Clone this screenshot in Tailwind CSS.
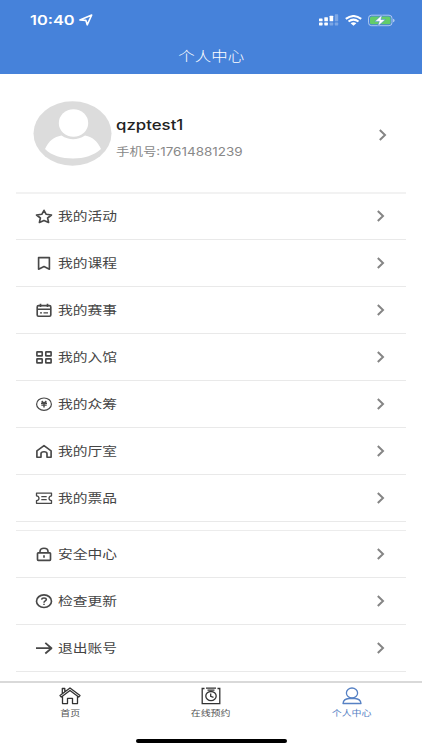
<!DOCTYPE html>
<html lang="zh-CN">
<head>
<meta charset="utf-8">
<meta name="viewport" content="width=device-width, initial-scale=1">
<title>个人中心</title>
<script src="https://cdn.jsdelivr.net/npm/@tailwindcss/browser@4"></script>
</head>
<body class="w-[422px] h-[750px] overflow-hidden bg-white flex flex-col font-['Inter','Noto_Sans_CJK_SC',sans-serif]">
<header class="h-[74px] shrink-0 bg-[#4682da] text-white flex flex-col">
  <div class="h-10 flex items-center justify-between pl-[31px] pr-[27px]">
    <div class="flex items-center">
      <span class="block w-[49px] text-[13px] leading-5 font-semibold whitespace-nowrap origin-left scale-x-[1.26] -ml-px">10:40</span>
      <svg class="w-[14px] h-[12px]" viewBox="0 0 14 12" fill="none" stroke="white" stroke-width="1.6" stroke-linejoin="round"><path d="M.9 5.9 12.7 1 8.2 10.800 6.900 6.400Z"/></svg>
    </div>
    <div class="flex items-center">
      <svg class="w-[20px] h-[12px] mr-[6px]" viewBox="0 0 20 12" fill="white"><rect x="0" y="4.5" width="3.6" height="2.8" rx=".6"/><rect x="5.3" y="3.2" width="3.6" height="4.1" rx=".6"/><rect x="10.6" y="1.7" width="3.6" height="5.6" rx=".6"/><rect x="15.8" y="0.3" width="3.4" height="7" rx=".6" opacity=".3"/><rect x="0" y="8.6" width="3.6" height="2.8" rx=".6"/><rect x="5.3" y="8.6" width="3.6" height="2.8" rx=".6"/><rect x="10.6" y="8.6" width="3.6" height="2.8" rx=".6" opacity=".3"/><rect x="15.8" y="8.6" width="3.4" height="2.8" rx=".6" opacity=".3"/></svg>
      <svg class="w-[17px] h-[11px] mr-[6px]" viewBox="0 0 17 11" fill="none" stroke="white" stroke-width="2"><path d="M.8 3.900Q8.500-1.900 16.200 3.900M3.500 6.500Q8.500 2.700 13.500 6.500"/><path d="M5.600 8.300Q8.500 6.300 11.400 8.300L8.500 10.800Z" fill="white" stroke="none"/></svg>
      <svg class="w-[27px] h-[13px]" viewBox="0 0 27 13"><rect x=".5" y="1.200" width="23.500" height="10.500" rx="3" fill="none" stroke="#fff" stroke-opacity=".55"/><rect x="2" y="2.600" width="20.500" height="7.700" rx="1.600" fill="#63cd69"/><path d="M25 4.700Q26.600 5 26.600 6.500T25 8.300Z" fill="#fff" opacity=".55"/><path d="M14.200 .7 6.800 7.400H11.300L9.800 12.300 17.400 5.500H12.900Z" fill="white" stroke="#4682da" stroke-width=".5"/></svg>
    </div>
  </div>
  <h1 class="h-[31px] flex items-center justify-center text-[13.600px] leading-5 font-light"><span class="block scale-x-[1.21]">个人中心</span></h1>
</header>

<main class="h-[607px] shrink-0 overflow-hidden px-4">
  <section class="h-[120px] flex items-center border-b-2 border-[#f2f2f2] pl-[17px] pr-[19px]">
    <svg class="w-[79px] h-[65px]" viewBox="0 0 79 65"><ellipse cx="39.500" cy="32.500" rx="39" ry="32.300" fill="#dcdcdc"/><path d="M12 48C15.500 40 21 36 28.500 34.500Q40 42 52 34.500C60 36 65 41 68 48C61 54.500 51 57.500 40 57.500S18 54.500 12 48Z" fill="white"/><ellipse cx="40.500" cy="22" rx="14.700" ry="13.800" fill="white"/></svg>
    <div class="flex flex-col ml-[4px] grow pt-[10px]">
      <span class="block w-[56px] text-[14px] leading-5 text-[#222] font-medium whitespace-nowrap origin-left scale-x-[1.2]">qzptest1</span>
      <span class="block w-[104px] mt-[7px] text-[11.500px] leading-5 text-[#888] whitespace-nowrap origin-left scale-x-[1.17]">手机号:17614881239</span>
    </div>
    <svg class="w-[8px] h-[12px] mt-[4px]" viewBox="0 0 8 12" fill="none" stroke="#858585" stroke-width="2"><path d="M.8 1 6 6 .8 11"/></svg>
  </section>
  <nav id="primary" class="-mt-px"></nav>
  <nav id="secondary" class="mt-[8px] border-t border-[#ececec]"></nav>
</main>

<footer class="h-[69px] shrink-0 border-t-2 border-[#d9d9d9] flex flex-col">
  <div class="grid grid-cols-3 h-[38px] text-[8.300px] leading-[10px] text-[#555]">
    <div class="flex flex-col items-center pt-[4px]">
      <svg class="w-[22px] h-[18px]" viewBox="0 0 22 18" fill="none" stroke="#333" stroke-width="1.300" stroke-linejoin="round"><path d="M1 8.600 11 1 21 8.600 19.700 10 11 3.500 2.300 10ZM3.500 9.500V16.600H8.500V11.300H13.500V16.600H18.500V9.500M3.300 6.500V1.500H5.800V4.500"/></svg>
      <span class="block scale-x-[1.2] mt-[3px]">首页</span>
    </div>
    <div class="flex flex-col items-center pt-[4px]">
      <svg class="w-[20px] h-[18px]" viewBox="0 0 20 18" fill="none" stroke="#333" stroke-width="1.300"><path d="M3.500 1.500H1.200V16.600H18.800V1.500H16.500M5 1.100H15M6.500 3.200H13.500"/><ellipse cx="10" cy="9.100" rx="5.200" ry="4.600"/><path d="M9.700 6.500V9.300L12.500 10.300"/></svg>
      <span class="block scale-x-[1.2] mt-[3px]">在线预约</span>
    </div>
    <div class="flex flex-col items-center pt-[4px] text-[#5681c4]">
      <svg class="w-[20px] h-[18px]" viewBox="0 0 20 18" fill="none" stroke="currentColor" stroke-width="1.300"><ellipse cx="10" cy="6" rx="5.600" ry="5"/><path d="M1 16.500Q1.500 11.800 7 11.500H13Q18.500 11.800 19 16.500Z" stroke-linejoin="round"/></svg>
      <span class="block scale-x-[1.2] mt-[3px]">个人中心</span>
    </div>
  </div>
  <div class="w-[151px] h-[4px] mt-[18px] ml-[136px] rounded-full bg-black"></div>
</footer>

<script>
const icons = {
  star: '<path d="M9 1.300 11.200 5.300 16.500 6 12.600 9 13.600 13.400 9 11.400 4.400 13.400 5.400 9 1.500 6 6.800 5.300Z"/>',
  bookmark: '<path d="M3.600 1.600H14.400V13.200L9 10.500 3.600 13.200Z"/>',
  calendar: '<rect x="2.200" y="2.600" width="13.600" height="10.600" rx="1.300"/><path d="M5.500.7V4M12.500.7V4M2.200 6.200H15.800"/><path d="M5 9.900H7M8.500 9.900H13" stroke-width="1.300"/>',
  grid: '<rect x="1.900" y="1.900" width="5.300" height="4" rx=".4"/><rect x="10.800" y="1.900" width="5.300" height="4" rx=".4"/><rect x="1.900" y="8.900" width="5.300" height="4" rx=".4"/><rect x="10.800" y="8.900" width="5.300" height="4" rx=".4"/>',
  yen: '<ellipse cx="9" cy="7.200" rx="7.400" ry="6.200" stroke-width="1.200"/><path d="M6.700 4.100 9 6.300 11.300 4.100M6 6.300H12M6.300 8.100H11.700M9 6.300V10.600" stroke-width="1.400"/>',
  home: '<path d="M1.900 13.200V6.900L9 1.600 16.100 6.900V13.200H12V9.700Q12 7.700 9 7.700T6 9.700V13.200Z"/>',
  ticket: '<path d="M1.500 2.200H16.500V4.800Q14 5.200 14 7.200T16.500 9.600V12.300H1.500V9.600Q4 9.200 4 7.200T1.500 4.800ZM6.300 5.700H11.700M6.300 8.700H11.700" stroke-width="1.300"/>',
  lock: '<rect x="2.500" y="5.800" width="13" height="7.500" rx=".7"/><path d="M5 5.800V4.500Q5 1.200 9 1.200T13 4.500V5.800M9 8.300V10.700"/>',
  help: '<ellipse cx="9" cy="7.200" rx="7.500" ry="6.300"/><path d="M6.600 5.700Q6.800 3.900 9 3.900T11.400 5.600C11.400 7 9 6.900 9 8.700M9 9.700V11.100" stroke-width="1.500"/>',
  arrow: '<path d="M1 7.200H16.300M10.300 1.900 16.500 7.200 10.300 12.500" stroke-width="1.800"/>'
};
const row = ([icon, label]) => `<a class="h-[47px] flex items-center border-b border-[#e9e9e9] pl-[19px] pr-[21px]">
  <svg class="w-[18px] h-[15px]" viewBox="0 0 18 15" fill="none" stroke="#484848" stroke-width="1.650" stroke-linejoin="round">${icons[icon]}</svg>
  <span class="block grow pt-[2px]"><span class="block w-[49px] ml-[5px] text-[12.300px] leading-5 text-[#444] whitespace-nowrap origin-left scale-x-[1.2]">${label}</span></span>
  <svg class="w-[8px] h-[12px] mb-px" viewBox="0 0 8 12" fill="none" stroke="#858585" stroke-width="2"><path d="M.8 1 6 6 .8 11"/></svg></a>`;
document.getElementById('primary').innerHTML = [['star','我的活动'],['bookmark','我的课程'],['calendar','我的赛事'],['grid','我的入馆'],['yen','我的众筹'],['home','我的厅室'],['ticket','我的票品']].map(row).join('');
document.getElementById('secondary').innerHTML = [['lock','安全中心'],['help','检查更新'],['arrow','退出账号']].map(row).join('');
</script>
</body>
</html>
